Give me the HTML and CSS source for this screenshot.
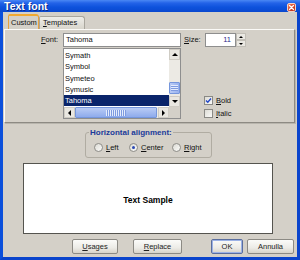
FILE: index.html
```html
<!DOCTYPE html>
<html>
<head>
<meta charset="utf-8">
<link rel="stylesheet" href="styles.css">
</head>
<body>
<div class="window">
  <div class="titlebar">
    <span class="title">Text font</span>
    <span class="close"><svg width="7" height="7" viewBox="0 0 7 7"><path d="M1.5 1.5 L5.5 5.5 M5.5 1.5 L1.5 5.5" stroke="#fff" stroke-width="1.3" stroke-linecap="round"/></svg></span>
  </div>
  <div class="client">
    <div class="tabs">
      <div class="tab active">Custom</div>
      <div class="tab"><u>T</u>emplates</div>
    </div>
    <div class="panel">
      <div class="row1">
        <span class="lbl lbl-font"><u>F</u>ont:</span>
        <div class="input font-input">Tahoma</div>
        <span class="lbl lbl-size"><u>S</u>ize:</span>
        <div class="input size-input">11</div>
        <div class="spinner">
          <span class="spin"><i class="tri-up small"></i></span>
          <span class="spin"><i class="tri-down small"></i></span>
        </div>
      </div>
      <div class="row2">
        <div class="listbox">
          <div class="list-main">
            <div class="rows">
              <div class="item">Symath</div>
              <div class="item">Symbol</div>
              <div class="item">Symeteo</div>
              <div class="item">Symusic</div>
              <div class="item sel">Tahoma</div>
            </div>
            <div class="vscroll">
              <span class="sbtn"><i class="tri-up"></i></span>
              <span class="vtrack-top"></span>
              <span class="thumb vthumb"><i class="grip vgrip"></i></span>
              <span class="vtrack-rest"></span>
              <span class="sbtn"><i class="tri-down"></i></span>
            </div>
          </div>
          <div class="hscroll">
            <span class="sbtn hbtn"><i class="tri-left"></i></span>
            <span class="thumb hthumb"><i class="grip hgrip"></i></span>
            <span class="sbtn hbtn"><i class="tri-right"></i></span>
            <span class="corner"></span>
          </div>
        </div>
        <div class="checks">
          <div class="check"><span class="cb"><svg width="7" height="7" viewBox="0 0 7 7"><path d="M1 3.5 L2.8 5.3 L6 1.5" fill="none" stroke="#2146c8" stroke-width="1.4"/></svg></span><span><u>B</u>old</span></div>
          <div class="check"><span class="cb"></span><span><u>I</u>talic</span></div>
        </div>
      </div>
    </div>
    <fieldset class="align">
      <legend>Horizontal alignment:</legend>
      <div class="radios">
        <span class="radio"><span class="rb"></span><span><u>L</u>eft</span></span>
        <span class="radio"><span class="rb on"></span><span><u>C</u>enter</span></span>
        <span class="radio"><span class="rb"></span><span><u>R</u>ight</span></span>
      </div>
    </fieldset>
    <div class="sample">Text Sample</div>
    <div class="buttons">
      <span class="btn usages"><u>U</u>sages</span>
      <span class="btn replace"><u>R</u>eplace</span>
      <span class="btn ok">OK</span>
      <span class="btn annulla">Annulla</span>
    </div>
  </div>
</div>
</body>
</html>
```

FILE: styles.css
```css
* { box-sizing: border-box; }
html, body { margin: 0; padding: 0; }
body {
  font-family: "Liberation Sans", Arial, sans-serif;
  font-size: 7.5px;
  color: #111;
  background: #d4d0c8;
}
u { text-decoration: underline; text-underline-offset: 1px; }

.window {
  width: 300px;
  height: 260px;
  display: flex;
  flex-direction: column;
  background: #d4d0c8;
}

.titlebar {
  height: 12px;
  flex: none;
  display: flex;
  align-items: flex-start;
  padding: 0 4px 0 4px;
  background: linear-gradient(#4a88f4 0%, #2363e8 25%, #0d52dc 60%, #0a48cf 100%);
  color: #fff;
}
.title {
  font-weight: bold;
  font-size: 10.5px;
  line-height: 12px;
  text-shadow: 1px 1px 0 #0b2c8a;
}
.close {
  margin-left: auto;
  margin-top: 3px;
  width: 9px;
  height: 9px;
  border: 1px solid #f4d2c4;
  border-radius: 2px;
  background: linear-gradient(135deg, #f08a68, #d9442a 50%, #b8321a);
  display: flex;
  align-items: center;
  justify-content: center;
}
.close svg { display: block; }

.client {
  flex: 1;
  display: flex;
  flex-direction: column;
  border-left: 3px solid #0b4fdb;
  border-right: 3px solid #0a44cc;
  border-bottom: 3px solid #0a44cc;
}

.tabs {
  height: 17px;
  flex: none;
  display: flex;
  align-items: flex-end;
  padding-left: 5px;
}
.tab {
  height: 13px;
  padding: 0 3px;
  line-height: 12px;
  border: 1px solid #a9a69d;
  border-bottom: none;
  border-radius: 2px 3px 0 0;
  background: linear-gradient(#eeede8, #d8d5cc);
}
.tab.active {
  height: 15px;
  width: 31px;
  padding: 0 2px;
  line-height: 13px;
  border: 1px solid #e6a23e;
  border-top: 2px solid #f0a830;
  border-bottom: none;
  background: #d4d0c8;
  position: relative;
  z-index: 1;
}
.tab + .tab { margin-left: 0; width: 46px; }

.panel {
  flex: none;
  margin: 0 2px 0 1px;
  border: 1px solid;
  border-color: #fbfaf7 #8d8a83 #8d8a83 #fbfaf7;
  box-shadow: 1px 1px 0 #b8b5ad;
  padding: 3px 0 3px 36px;
  display: flex;
  flex-direction: column;
}

.row1 {
  display: flex;
  height: 14px;
  align-items: stretch;
}
.lbl {
  line-height: 14px;
}
.lbl-font { width: 22px; }
.lbl-size { width: 21px; margin-left: 3px; }
.input {
  background: #fff;
  border: 1px solid #8e8e8e;
  line-height: 12px;
  padding-left: 2px;
}
.font-input { width: 118px; }
.size-input { width: 31px; text-align: right; padding-right: 4px; color: #2a2a8a; }
.spinner {
  width: 10px;
  display: flex;
  flex-direction: column;
}
.spin {
  flex: 1;
  background: #ebe9e3;
  border: 1px solid #c2bfb7;
  display: flex;
  align-items: center;
  justify-content: center;
}

.row2 {
  display: flex;
  margin-top: 1px;
  padding-left: 22px;
}
.listbox {
  width: 118px;
  height: 71px;
  border: 1px solid #8e8e8e;
  background: #fff;
  display: flex;
  flex-direction: column;
}
.list-main {
  flex: 1;
  display: flex;
  min-height: 0;
}
.rows {
  flex: 1;
  padding-top: 1px;
  overflow: hidden;
}
.item {
  height: 11.25px;
  line-height: 11.25px;
  padding-left: 1px;
  white-space: nowrap;
}
.item.sel {
  background: #0a246a;
  color: #fff;
}
.vscroll {
  width: 11px;
  display: flex;
  flex-direction: column;
  background: #eceae4;
}
.sbtn {
  height: 11px;
  flex: none;
  background: #e9e7e1;
  border: 1px solid #cfccc4;
  display: flex;
  align-items: center;
  justify-content: center;
}
.vtrack-top { height: 22px; flex: none; }
.vtrack-rest { flex: 1; }
.thumb {
  background: linear-gradient(90deg, #b9cbf5, #98b2ee);
  border: 1px solid #7596dc;
  border-radius: 1px;
  display: flex;
  align-items: center;
  justify-content: center;
}
.vthumb { height: 12px; flex: none; }
.grip { display: block; }
.vgrip {
  width: 7px;
  height: 6px;
  background: repeating-linear-gradient(#e4ecfd 0 1px, #7e9be0 1px 2px);
}
.hscroll {
  height: 11px;
  flex: none;
  display: flex;
  background: #eceae4;
}
.hbtn { width: 11px; height: 11px; }
.hthumb {
  flex: 1;
  margin-right: 1px;
  background: linear-gradient(#b9cbf5, #8eabec);
}
.hgrip {
  width: 20px;
  height: 6px;
  background: repeating-linear-gradient(90deg, #e4ecfd 0 1px, #7e9be0 1px 2px);
}
.corner { width: 11px; background: #d4d0c8; }

.tri-up, .tri-down, .tri-left, .tri-right { display: block; width: 0; height: 0; }
.tri-up { border-left: 3px solid transparent; border-right: 3px solid transparent; border-bottom: 3px solid #000; }
.tri-down { border-left: 3px solid transparent; border-right: 3px solid transparent; border-top: 3px solid #000; }
.tri-left { border-top: 3px solid transparent; border-bottom: 3px solid transparent; border-right: 3px solid #000; }
.tri-right { border-top: 3px solid transparent; border-bottom: 3px solid transparent; border-left: 3px solid #000; }
.tri-up.small { border-left-width: 2px; border-right-width: 2px; border-bottom-width: 2px; }
.tri-down.small { border-left-width: 2px; border-right-width: 2px; border-top-width: 2px; }

.checks {
  margin-left: 23px;
  align-self: flex-end;
  display: flex;
  flex-direction: column;
  gap: 2px;
}
.check {
  height: 11px;
  display: flex;
  align-items: center;
  gap: 3px;
}
.cb {
  width: 9px;
  height: 9px;
  border: 1px solid #8a8985;
  background: linear-gradient(135deg, #dcdbd5, #fbfbf9);
  display: flex;
  align-items: center;
  justify-content: center;
}
.cb svg { display: block; }

.align {
  margin: 5px 0 0 82px;
  width: 127px;
  border: 1px solid #b0aca2;
  border-radius: 3px;
  padding: 5px 3px 4px 3px;
  min-width: 0;
}
.align legend {
  padding: 0 1px;
  font-weight: bold;
  font-size: 8px;
  line-height: 9px;
  color: #1b3a9a;
}
.radios {
  display: grid;
  grid-template-columns: 35px 43px auto;
  padding-left: 5px;
  height: 11px;
}
.radio {
  display: flex;
  align-items: center;
  gap: 3px;
}
.rb {
  width: 9px;
  height: 9px;
  border-radius: 50%;
  border: 1px solid #8e8d88;
  background: linear-gradient(135deg, #dcdbd5, #fbfbf9);
  display: flex;
  align-items: center;
  justify-content: center;
}
.rb.on::after {
  content: "";
  width: 3px;
  height: 3px;
  border-radius: 50%;
  background: #2a48b4;
}

.sample {
  margin: 5px 0 0 20px;
  width: 250px;
  height: 71px;
  background: #fff;
  border: 1px solid #55544f;
  display: flex;
  align-items: center;
  justify-content: center;
  font-weight: bold;
  font-size: 8.5px;
  color: #000;
  padding-top: 2px;
}

.buttons {
  margin-top: 5px;
  display: flex;
  height: 15px;
  padding-left: 69px;
}
.btn {
  height: 15px;
  display: flex;
  align-items: center;
  justify-content: center;
  border: 1px solid #8c8a84;
  border-radius: 2px;
  background: linear-gradient(#fbfbf9, #ecebe6 60%, #d6d3ca);
  color: #222;
}
.usages { width: 46px; }
.replace { width: 49px; margin-left: 15px; }
.ok {
  width: 32px;
  margin-left: 29px;
  border-color: #5a6e9e;
  box-shadow: inset 0 0 0 1px #9cb2e6;
}
.annulla { width: 47px; margin-left: 4px; }
```
